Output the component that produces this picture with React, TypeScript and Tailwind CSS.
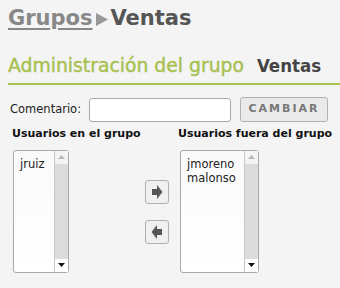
import React from 'react'

const body = { fontFamily: '"DejaVu Sans", Verdana, sans-serif' }

// fake listbox with a grey scroll track
const ListBox = ({ items, width }: { items: string[]; width: string }) => (
  <div className={`flex h-[123px] shrink-0 ${width} rounded-[3px] border border-[#a9a9a9] bg-gradient-to-b from-[#fafafa] to-white`}>
    <div className="flex-1 px-[6px] pt-[6px] text-[11.5px] leading-[14px] text-[#222]">
      {items.map((it) => (
        <div key={it}>{it}</div>
      ))}
    </div>
    <div className="flex w-[14px] flex-col border-l border-[#c8c8c8] bg-[#dcdcdc]">
      <div className="flex h-[13px] items-center justify-center bg-[#f4f4f4]">
        <svg width="7" height="4" viewBox="0 0 7 4"><path d="M0 4L3.5 0L7 4Z" fill="#b8b8b8" /></svg>
      </div>
      <div className="flex-1" />
      <div className="flex h-[13px] items-center justify-center bg-white">
        <svg width="7" height="4" viewBox="0 0 7 4"><path d="M0 0L7 0L3.5 4Z" fill="#111" /></svg>
      </div>
    </div>
  </div>
)

const ArrowBtn = ({ dir }: { dir: 'right' | 'left' }) => (
  <button className="flex h-[24px] w-[24px] items-center justify-center rounded-[3px] border border-[#b0b0b0] bg-[#f0f0f0]">
    <svg width="12" height="14" viewBox="0 0 12 14">
      {dir === 'right' ? (
        <path d="M1 4H6V0L11.5 7L6 14V10H1Z" fill="#555" />
      ) : (
        <path d="M11 4H6V0L0.5 7L6 14V10H11Z" fill="#555" />
      )}
    </svg>
  </button>
)

export default function App() {
  return (
    <div className="h-[288px] w-[340px] overflow-hidden bg-[#f4f4f4] pl-[8px]" style={body}>
      <div className="flex items-center pt-[4px] text-[21px] font-bold leading-[28px]">
        <a className="text-[#888] underline decoration-[1.5px] underline-offset-[3px]">Grupos</a>
        <svg className="mx-[3px] mt-[2px]" width="12" height="13" viewBox="0 0 12 13">
          <path d="M0 0L12 6.5L0 13Z" fill="#999" />
        </svg>
        <span className="text-[#555]">Ventas</span>
      </div>

      <div className="mt-[22px] flex items-baseline border-b-2 border-[#a7c150] pb-[5px] text-[18.8px] leading-[24px]">
        <span className="text-[#a7c150] [-webkit-text-stroke:0.4px_#a7c150]">Administración del grupo</span>
        <span className="ml-[13px] text-[18.5px] font-bold text-[#444]" style={{ fontFamily: '"DejaVu Sans Condensed", "DejaVu Sans", sans-serif' }}>
          Ventas
        </span>
      </div>

      <div className="mt-[12px] flex items-center pl-[2px] text-[11.5px] text-[#222]">
        <span>Comentario:</span>
        <input className="ml-[8px] h-[24px] w-[142px] rounded-[3px] border border-[#a9a9a9] bg-white" />
        <button className="ml-[9px] h-[25px] w-[88px] rounded-[3px] border border-[#b0b0b0] bg-[#eaeaea] text-[11px] font-bold tracking-[2px] text-[#777]">
          CAMBIAR
        </button>
      </div>

      <div className="mt-[4px] flex text-[11px] font-bold text-[#111]">
        <div className="w-[170px] pl-[4px]">Usuarios en el grupo</div>
        <div>Usuarios fuera del grupo</div>
      </div>

      <div className="mt-[7px] flex items-start pl-[5px]">
        <ListBox items={['jruiz']} width="w-[56px]" />
        <div className="ml-[76px] mt-[30px] flex shrink-0 flex-col gap-[16px]">
          <ArrowBtn dir="right" />
          <ArrowBtn dir="left" />
        </div>
        <div className="ml-[11px] shrink-0">
          <ListBox items={['jmoreno', 'malonso']} width="w-[79px]" />
        </div>
      </div>
    </div>
  )
}
